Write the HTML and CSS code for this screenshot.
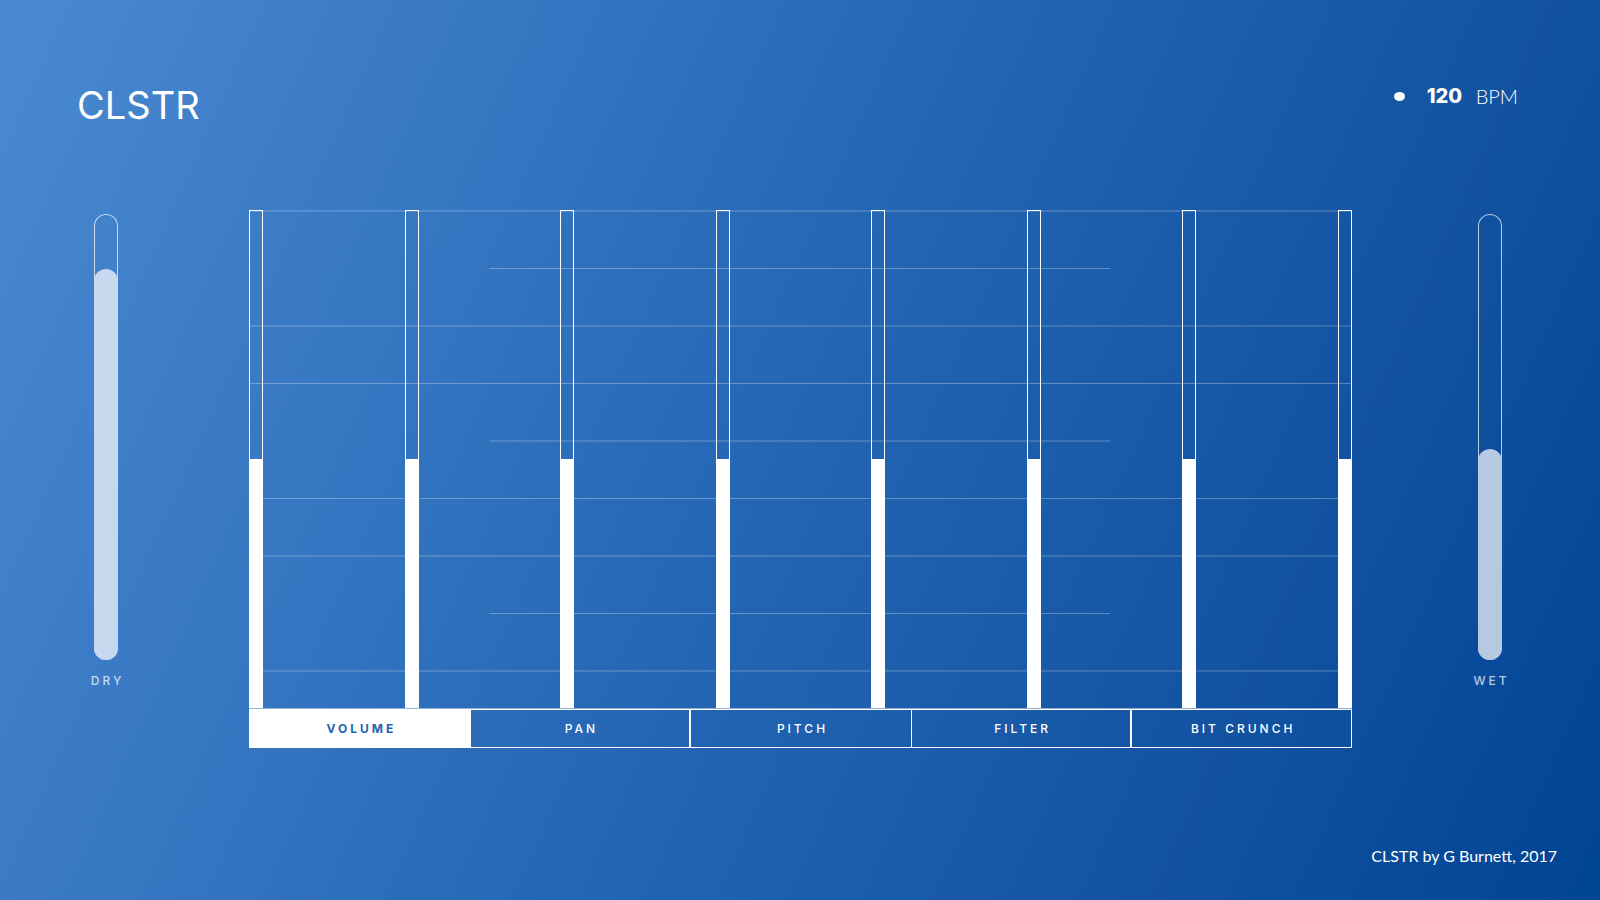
FILE: index.html
```html
<!DOCTYPE html>
<html lang="en">
<head>
<meta charset="utf-8">
<meta name="viewport" content="width=device-width, initial-scale=1">
<title>CLSTR</title>
<link rel="stylesheet" href="styles.css">
</head>
<body>
<header class="header">
  <h1 class="title">CLSTR</h1>
  <div class="tempo">
    <span class="beat"></span>
    <input class="tempo-value" id="bpm" type="text" inputmode="numeric" value="120">
    <label class="tempo-unit" for="bpm">BPM</label>
  </div>
</header>
<main class="main">
  <div class="mix">
    <div class="mix-track">
      <div class="mix-fill" style="height:87.7%"></div>
      <input class="range" id="dry" type="range" value="88">
    </div>
    <label class="mix-label" for="dry">DRY</label>
  </div>
  <section class="stage">
    <div class="grid">
      <svg class="lines" aria-hidden="true">
        <line x1="0" x2="100%" y1="1" y2="1"/>
        <line x1="21.8%" x2="78.1%" y1="58.5" y2="58.5"/>
        <line x1="0" x2="100%" y1="116" y2="116"/>
        <line x1="0" x2="100%" y1="173.5" y2="173.5"/>
        <line x1="21.8%" x2="78.1%" y1="231" y2="231"/>
        <line x1="0" x2="100%" y1="288.5" y2="288.5"/>
        <line x1="0" x2="100%" y1="346" y2="346"/>
        <line x1="21.8%" x2="78.1%" y1="403.5" y2="403.5"/>
        <line x1="0" x2="100%" y1="461" y2="461"/>
      </svg>
      <div class="bar"><div class="bar-fill" style="height:50%"></div><input class="range" type="range" value="50" aria-label="Step 1"></div>
      <div class="bar"><div class="bar-fill" style="height:50%"></div><input class="range" type="range" value="50" aria-label="Step 2"></div>
      <div class="bar"><div class="bar-fill" style="height:50%"></div><input class="range" type="range" value="50" aria-label="Step 3"></div>
      <div class="bar"><div class="bar-fill" style="height:50%"></div><input class="range" type="range" value="50" aria-label="Step 4"></div>
      <div class="bar"><div class="bar-fill" style="height:50%"></div><input class="range" type="range" value="50" aria-label="Step 5"></div>
      <div class="bar"><div class="bar-fill" style="height:50%"></div><input class="range" type="range" value="50" aria-label="Step 6"></div>
      <div class="bar"><div class="bar-fill" style="height:50%"></div><input class="range" type="range" value="50" aria-label="Step 7"></div>
      <div class="bar"><div class="bar-fill" style="height:50%"></div><input class="range" type="range" value="50" aria-label="Step 8"></div>
    </div>
    <div class="tabs">
      <button class="tab tab-active" type="button">VOLUME</button>
      <button class="tab tab-closed" type="button">PAN</button>
      <button class="tab" type="button">PITCH</button>
      <button class="tab tab-closed" type="button">FILTER</button>
      <button class="tab tab-closed" type="button">BIT CRUNCH</button>
    </div>
  </section>
  <div class="mix">
    <div class="mix-track">
      <div class="mix-fill" style="height:47.3%"></div>
      <input class="range" id="wet" type="range" value="47">
    </div>
    <label class="mix-label" for="wet">WET</label>
  </div>
</main>
<footer class="footer">CLSTR by G Burnett, 2017</footer>
</body>
</html>
```

FILE: styles.css
```css
* { box-sizing: border-box; }

body {
  margin: 0;
  min-height: 100vh;
  display: flex;
  flex-direction: column;
  color: #fff;
  font-family: Inter, "Liberation Sans", sans-serif;
  background: linear-gradient(114deg, #4a8ad2 0%, #3a7ac5 22%, #2264b2 52%, #1252a1 78%, #004494 100%);
}

.header {
  display: flex;
  justify-content: space-between;
  align-items: flex-start;
  padding: 80px 82px 0 77px;
}

.title {
  margin: 0;
  font-size: 38px;
  line-height: 50px;
  font-weight: 400;
}

.tempo {
  display: flex;
  align-items: center;
  font-size: 20px;
  line-height: 32px;
}

.beat {
  width: 11px;
  height: 9px;
  margin-right: 22px;
  border-radius: 50%;
  background: #fff;
}

.tempo-value {
  width: 40px;
  height: 32px;
  margin-right: 9px;
  padding: 0;
  border: 0;
  background: none;
  color: inherit;
  font: 800 20px Inter, sans-serif;
}

.tempo-unit {
  font-family: Lato, sans-serif;
  font-weight: 300;
}

.main {
  display: grid;
  grid-template-columns: 56px minmax(0, 1fr) 56px;
  padding: 80px 82px 0 78px;
}

.mix {
  display: flex;
  flex-direction: column;
  align-items: center;
  padding-top: 4px;
  opacity: 0.7;
}

.mix-track {
  position: relative;
  display: flex;
  align-items: flex-end;
  width: 24px;
  height: 446px;
  border-radius: 12px;
  box-shadow: inset 0 0 0 1px #fff;
}

.mix-fill {
  width: 100%;
  border-radius: 12px;
  background: #fff;
}

.mix-label {
  margin-top: 12px;
  padding-left: 3px;
  font-size: 12px;
  font-weight: 500;
  line-height: 18px;
  letter-spacing: 3px;
}

.range {
  position: absolute;
  inset: 0;
  width: 100%;
  height: 100%;
  margin: 0;
  opacity: 0;
  cursor: pointer;
  writing-mode: vertical-lr;
  direction: rtl;
}

.stage { margin: 0 110px 0 115px; }

.grid {
  position: relative;
  display: flex;
  justify-content: space-between;
  height: 499px;
  border-bottom: 1px solid rgba(190, 210, 232, 0.7);
}

.lines {
  position: absolute;
  inset: 0;
  width: 100%;
  height: 100%;
  stroke: #fff;
  stroke-opacity: 0.3;
}

.bar {
  position: relative;
  display: flex;
  align-items: flex-end;
  width: 14px;
  box-shadow: inset 0 0 0 1px #fff;
}

.bar-fill {
  width: 100%;
  background: #fff;
}

.tabs {
  display: grid;
  grid-template-columns: repeat(5, 1fr);
}

.tab {
  height: 39px;
  padding: 0 0 0 3px;
  border: 1px solid #fff;
  border-right-width: 0;
  background: none;
  color: inherit;
  font: 500 12px Inter, sans-serif;
  letter-spacing: 3px;
  cursor: pointer;
}

.tab-closed { border-right-width: 1px; }

.tab-active {
  background: #fff;
  color: #2664ae;
  font-weight: 700;
}

.footer {
  margin-top: auto;
  padding: 0 43px 32px;
  text-align: right;
  font: 400 16px/24px Lato, sans-serif;
}
```
